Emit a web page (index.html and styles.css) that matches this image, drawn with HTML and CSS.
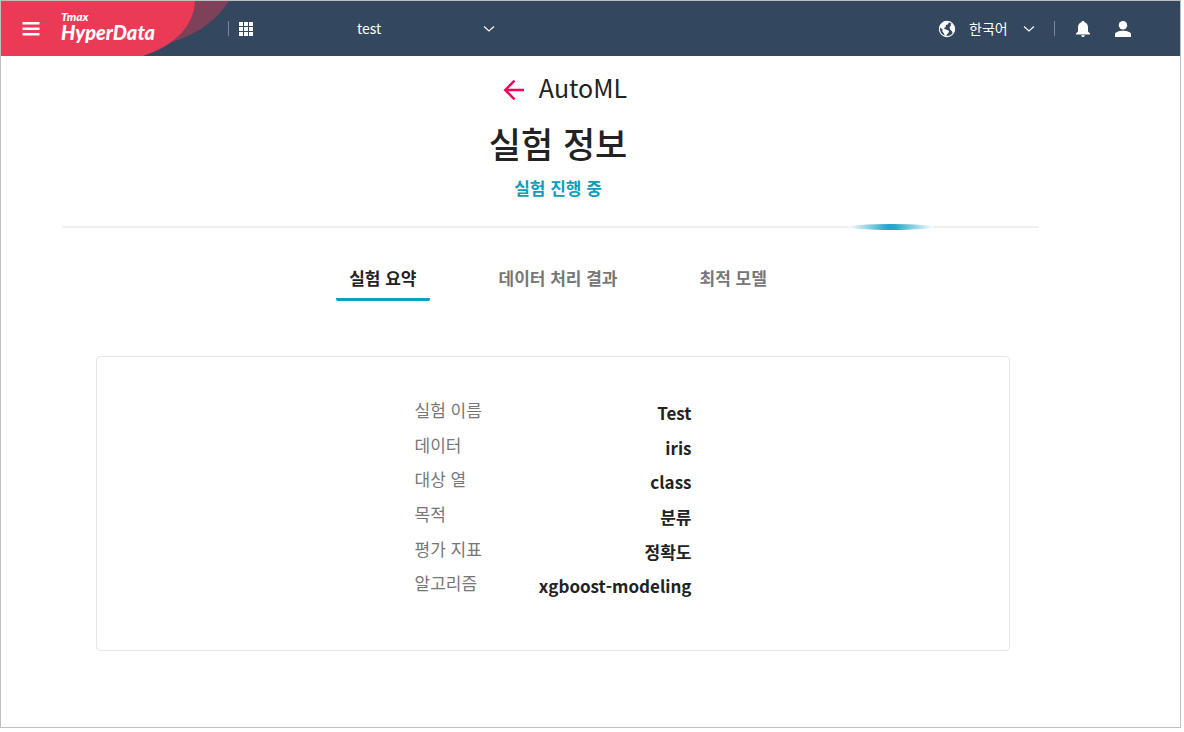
FILE: index.html
```html
<!DOCTYPE html>
<html lang="ko">
<head>
<meta charset="utf-8">
<meta name="viewport" content="width=device-width, initial-scale=1">
<title>Tmax HyperData - AutoML</title>
<link rel="stylesheet" href="styles.css">
</head>
<body>
<div class="app">
  <header class="topbar">
    <div class="brand">
      <svg class="brand-shape" viewBox="0 0 228 55" aria-hidden="true">
        <path d="M190 0H228C214 22 193 35 162 44Z" fill="#7d4159"/>
        <path d="M0 0H194C193 24 175 44 142 55H0Z" fill="#e93a56"/>
      </svg>
      <div class="brand-content">
        <button class="icon-button" type="button" aria-label="메뉴">
          <svg width="18" height="16" viewBox="0 0 18 16"><path d="M0.500 1h17v2.500H0.500zM0.500 6.500h17v2.500H0.500zM0.500 12h17v2.500H0.500z" fill="#fff"/></svg>
        </button>
        <a class="logo" href="#"><span class="logo-company">Tmax</span><span class="logo-product">HyperData</span></a>
      </div>
    </div>
    <span class="divider"></span>
    <button class="icon-button apps" type="button" aria-label="앱 목록">
      <svg width="14" height="14" viewBox="0 0 14 14"><path d="M0 0h4v4H0zM5 0h4v4H5zM10 0h4v4h-4zM0 5h4v4H0zM5 5h4v4H5zM10 5h4v4h-4zM0 10h4v4H0zM5 10h4v4H5zM10 10h4v4h-4z" fill="#fff"/></svg>
    </button>
    <div class="picker project-picker">
      <select aria-label="프로젝트"><option>test</option></select>
      <svg width="12" height="8" viewBox="0 0 12 8"><path d="M1 1.500l5 4.500 5-4.500" fill="none" stroke="#fff" stroke-width="1.1"/></svg>
    </div>
    <div class="tools">
      <svg class="globe" width="18" height="18" viewBox="0 0 18 18" aria-hidden="true">
        <circle cx="9" cy="9" r="7.6" fill="none" stroke="#fff" stroke-width="1.1"/>
        <path d="M2 5.5L5 2.2 9.5 1.2 11 2.4 9.8 4.6 8 5 7.6 7 5.6 8.2 8 9.4 11 10.8 10.4 13 8.8 14.4 8.2 16.6 6.8 16.2 6 13.4 4.4 11.6 4.6 9.6 2 7.6Z" fill="#fff"/>
        <path d="M12.6 3.4L15 4.4 16.8 8 16.2 12 14.8 13.4 14 11.2 12 9.6 11.6 7 13 5.4Z" fill="#fff"/>
      </svg>
      <div class="picker language-picker">
        <select aria-label="언어"><option>한국어</option></select>
        <svg width="12" height="8" viewBox="0 0 12 8"><path d="M1 1.500l5 4.500 5-4.500" fill="none" stroke="#fff" stroke-width="1.1"/></svg>
      </div>
      <span class="divider"></span>
      <button class="icon-button bell" type="button" aria-label="알림">
        <svg width="16" height="18" viewBox="0 0 16 18"><path d="M8 1c.8 0 1.4.5 1.5 1.2C12 2.800 13 5 13 7.300V11.500L15 13.500V14.500H1V13.500L3 11.500V7.300C3 5 4 2.800 6.500 2.200 6.600 1.500 7.200 1 8 1ZM6.200 15.200H9.800C9.800 16.300 9 17 8 17S6.200 16.300 6.200 15.200Z" fill="#fff"/></svg>
      </button>
      <button class="icon-button user" type="button" aria-label="사용자">
        <svg width="18" height="18" viewBox="0 0 18 18"><circle cx="9" cy="5.200" r="4.200" fill="#fff"/><path d="M1 17V14.500C1 12 5 10.800 9 10.800S17 12 17 14.500V17Z" fill="#fff"/></svg>
      </button>
    </div>
  </header>

  <main class="content">
    <div class="service">
      <a class="back" href="#" aria-label="뒤로">
        <svg width="22" height="22" viewBox="0 0 22 22"><path d="M21 11H2.500M11.500 1.700L2.200 11l9.300 9.300" fill="none" stroke="#f0005c" stroke-width="2.400"/></svg>
      </a>
      <span class="service-name">AutoML</span>
    </div>
    <h1 class="title">실험 정보</h1>
    <p class="status">실험 진행 중</p>
    <div class="progress" role="progressbar" aria-label="실험 진행 중"><span class="progress-glow"></span></div>

    <nav class="tabs" role="tablist">
      <button class="tab tab-active" type="button" role="tab" aria-selected="true">실험 요약</button>
      <button class="tab" type="button" role="tab" aria-selected="false">데이터 처리 결과</button>
      <button class="tab" type="button" role="tab" aria-selected="false">최적 모델</button>
    </nav>

    <section class="card">
      <dl class="summary">
        <div class="row"><dt>실험 이름</dt><dd>Test</dd></div>
        <div class="row"><dt>데이터</dt><dd>iris</dd></div>
        <div class="row"><dt>대상 열</dt><dd>class</dd></div>
        <div class="row"><dt>목적</dt><dd>분류</dd></div>
        <div class="row"><dt>평가 지표</dt><dd>정확도</dd></div>
        <div class="row"><dt>알고리즘</dt><dd>xgboost-modeling</dd></div>
      </dl>
    </section>
  </main>
</div>
</body>
</html>
```
FILE: styles.css
```css
* { box-sizing: border-box; }

body {
  margin: 0;
  background: #fff;
  color: #222;
  font-family: "Noto Sans CJK KR", sans-serif;
  font-size: 17px;
}

button, select {
  margin: 0;
  padding: 0;
  border: 0;
  background: none;
  color: inherit;
  font: inherit;
  cursor: pointer;
}

svg { display: block; }

.app {
  min-height: calc(100vh - 4px);
  margin: 0 3px 4px 0;
  border: 1px solid #bfbfbf;
}

.topbar {
  display: flex;
  align-items: center;
  height: 55px;
  background: #33475e;
  color: #fff;
  font-size: 14px;
}

.brand {
  display: grid;
  flex: none;
  width: 227px;
  height: 100%;
}

.brand-shape, .brand-content { grid-area: 1 / 1; }

.brand-shape { width: 228px; height: 55px; }

.brand-content {
  display: flex;
  align-items: center;
  padding-left: 21px;
  z-index: 1;
}

.icon-button { flex: none; }

.logo {
  display: flex;
  flex-direction: column;
  margin-left: 21px;
  padding-bottom: 6px;
  color: #fff;
  font-family: Lato, sans-serif;
  font-style: italic;
  font-weight: 900;
  text-decoration: none;
}

.logo-company { font-size: 12px; line-height: 12px; }
.logo-product { font-size: 20px; line-height: 18px; }

.divider {
  flex: none;
  width: 1px;
  height: 15px;
  background: #7b8795;
}

.apps { margin-left: 10px; }

.picker {
  display: grid;
  align-items: center;
}

.picker select, .picker svg { grid-area: 1 / 1; }

.picker select {
  appearance: none;
  width: 100%;
  height: 24px;
  padding-bottom: 2px;
}

.picker svg {
  justify-self: end;
  pointer-events: none;
}

.project-picker {
  width: 138px;
  margin-left: 104px;
}

.tools {
  display: flex;
  align-items: center;
  margin-left: auto;
  padding-right: 48px;
}

.language-picker {
  width: 66px;
  margin: 0 19px 0 13px;
}

.bell { margin-left: 20px; }
.user { margin-left: 23px; }

.content {
  display: flex;
  flex-direction: column;
  padding: 11px 65px 75px 0;
}

.service {
  display: flex;
  align-items: center;
  justify-content: center;
  gap: 14px;
  height: 40px;
  padding-left: 14px;
  font-size: 25px;
}

.back { padding-top: 6px; }

.title {
  margin: 10px 0 0;
  font-size: 35px;
  font-weight: 500;
  line-height: 52px;
  text-align: center;
}

.status {
  margin: 5px 0 0;
  color: #0e9dbd;
  font-weight: 700;
  line-height: 28px;
  text-align: center;
}

.progress {
  display: grid;
  align-items: center;
  height: 6px;
  margin: 22px 76px 0 61px;
  background: linear-gradient(#efefef, #efefef) center / 100% 2px no-repeat;
}

.progress-glow {
  width: 86px;
  height: 6px;
  margin-left: 80.5%;
  border-radius: 50%;
  background: linear-gradient(90deg, #fff, #27a9c5 45%, #27a9c5 55%, #fff);
}

.tabs {
  display: flex;
  justify-content: center;
  gap: 56px;
  margin-top: 28px;
}

.tab {
  height: 43px;
  padding: 0 13px 2px;
  border-bottom: 3px solid transparent;
  color: #777;
  font-weight: 700;
}

.tab-active {
  border-bottom-color: #0e9dbd;
  border-radius: 2px;
  color: #222;
}

.card {
  display: flex;
  justify-content: center;
  margin: 55px 105px 0 95px;
  padding: 39px 24px 46px;
  border: 1px solid #e6e6e6;
  border-radius: 4px;
}

.summary {
  display: flex;
  flex-direction: column;
  width: 277px;
  height: 208px;
  margin: 0;
}

.row {
  display: flex;
  flex: 1;
  justify-content: space-between;
  line-height: 28px;
}

.row dt { color: #777; }

.row dd {
  margin: 0;
  padding-top: 3px;
  font-weight: 700;
}
```
